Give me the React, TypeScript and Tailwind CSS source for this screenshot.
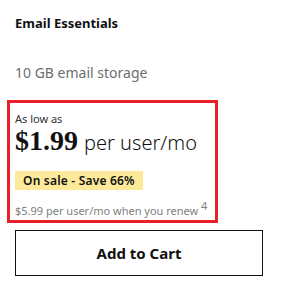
export default function App() {
  return (
    <div className="w-[292px] h-[293px] bg-white px-[15px] font-['Noto_Sans',sans-serif] text-[#111]">
      <h2 className="pt-[15px] text-[13px] leading-[16px] font-bold">Email Essentials</h2>
      <p className="mt-[32px] text-[14px] leading-[20px] text-[#6e6e6e]">10 GB email storage</p>

      {/* pricing block */}
      <div className="mt-[17px] -mx-[8px] w-[211px] h-[123px] border-[3px] border-[#e8202a] px-[5px] pt-[10px]">
        <p className="text-[11px] leading-[12px] text-[#333]">As low as</p>
        <div className="mt-[3px] flex items-baseline gap-[6px] leading-[26px]">
          <span className="font-['Liberation_Serif',serif] text-[28px] font-bold">$1.99</span>
          <span className="text-[20px] font-light">per user/mo</span>
        </div>
        <div className="mt-[15px] inline-block bg-[#fde99a] px-[8px] text-[12px] leading-[19px] font-semibold tracking-[0.2px]">
          On sale - Save 66%
        </div>
        <p className="mt-[13px] text-[11px] leading-[14px] text-[#808080]">
          $5.99 per user/mo when you renew <sup className="text-[11px]">4</sup>
        </p>
      </div>

      <button className="mt-[7px] w-[248px] h-[46px] border border-[#111] text-[15px] font-bold">
        Add to Cart
      </button>
    </div>
  );
}
